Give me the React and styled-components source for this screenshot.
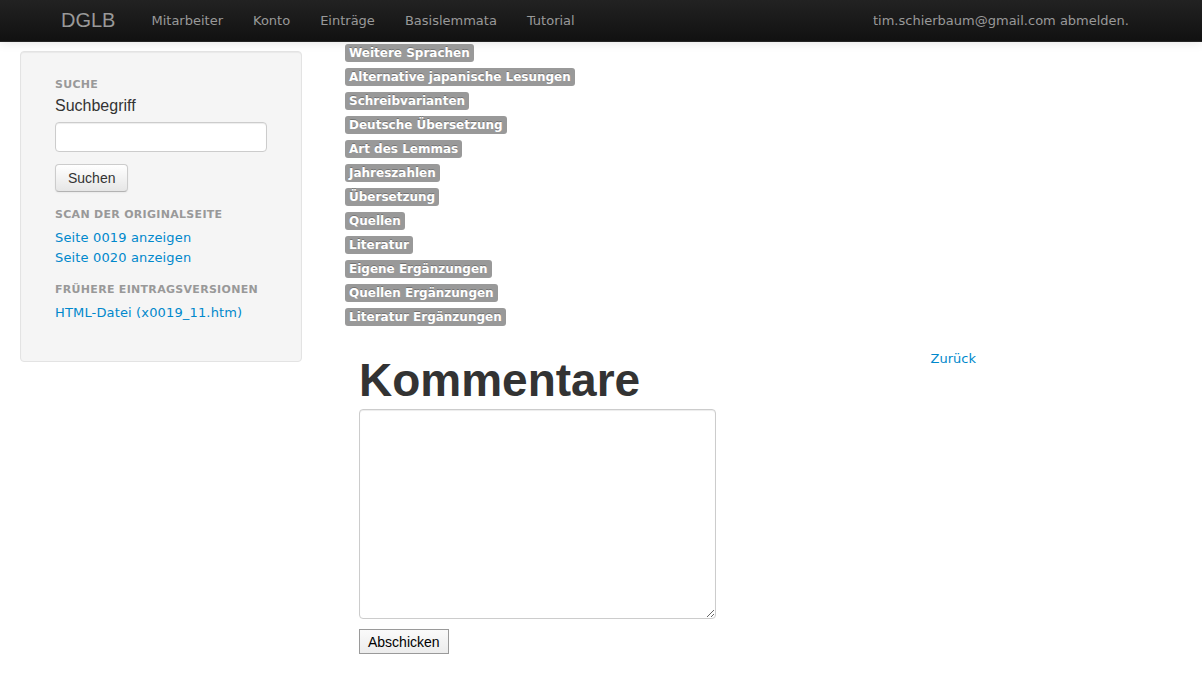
import React from "react";
import styled, { createGlobalStyle } from "styled-components";

const GlobalStyle = createGlobalStyle`
  body {
    margin: 0;
    background: #fff;
    font-family: "DejaVu Sans", Verdana, sans-serif;
    color: #333;
  }
`;

const Nav = styled.nav`
  display: flex;
  align-items: center;
  justify-content: space-between;
  height: 41px;
  padding-left: 61px;
  padding-right: 73px;
  background: linear-gradient(to bottom, #222222, #111111);
  border-bottom: 1px solid #252525;
  box-shadow: 0 1px 10px rgba(0, 0, 0, 0.1);
`;

const Brand = styled.a`
  font-family: "Liberation Sans", Arial, sans-serif;
  font-size: 20px;
  color: #999;
  margin-right: 21px;
`;

const NavLinks = styled.ul`
  display: flex;
  list-style: none;
  margin: 0;
  padding: 0;
  flex: 1;
`;

const NavLink = styled.li`
  font-size: 13px;
  color: #999;
  padding: 0 15px;
  cursor: pointer;

  &:hover {
    color: #fff;
  }
`;

const UserInfo = styled.span`
  font-size: 13px;
  color: #999;
`;

const Body = styled.div`
  display: flex;
  align-items: flex-start;
  padding-left: 20px;
`;

const Well = styled.aside`
  width: 212px;
  margin-top: 9px;
  padding: 24px 34px 38px;
  background: #f5f5f5;
  border: 1px solid #e3e3e3;
  border-radius: 4px;
  box-shadow: inset 0 1px 1px rgba(0, 0, 0, 0.05);
`;

const NavHeader = styled.div`
  font-size: 11px;
  line-height: 18px;
  font-weight: bold;
  letter-spacing: 0.3px;
  text-transform: uppercase;
  color: #999;
  margin-top: ${(p) => p.$gap || 0}px;
`;

const FieldLabel = styled.label`
  display: block;
  font-family: "Liberation Sans", Arial, sans-serif;
  font-size: 16px;
  line-height: 20px;
  margin-top: 2px;
`;

const TextInput = styled.input`
  display: block;
  box-sizing: border-box;
  width: 212px;
  height: 30px;
  margin-top: 6px;
  border: 1px solid #ccc;
  border-radius: 4px;
  background: #fff;
  box-shadow: inset 0 1px 1px rgba(0, 0, 0, 0.075);
`;

const SearchButton = styled.button`
  display: block;
  box-sizing: border-box;
  margin-top: 12px;
  height: 28px;
  padding: 0 12px;
  font-family: "Liberation Sans", Arial, sans-serif;
  font-size: 14px;
  color: #333;
  background: linear-gradient(to bottom, #ffffff, #e6e6e6);
  border: 1px solid #ccc;
  border-bottom-color: #b3b3b3;
  border-radius: 4px;
  box-shadow: inset 0 1px 0 rgba(255, 255, 255, 0.2), 0 1px 2px rgba(0, 0, 0, 0.05);
`;

const SideLink = styled.a`
  display: block;
  font-size: 13px;
  line-height: 20px;
  letter-spacing: 0.15px;
  color: #0088cc;
  text-decoration: none;
  margin-top: ${(p) => p.$gap || 0}px;
`;

const Main = styled.main`
  width: 631px;
  margin-left: 43px;
`;

const Labels = styled.div`
  display: flex;
  flex-direction: column;
  align-items: flex-start;
  gap: 6px;
  margin-top: 2px;
`;

const Label = styled.span`
  font-size: 12px;
  line-height: 14px;
  font-weight: bold;
  color: #fff;
  padding: 2px 4px;
  background: #999;
  border-radius: 3px;
  text-shadow: 0 -1px 0 rgba(0, 0, 0, 0.25);
`;

const Comments = styled.section`
  margin-top: 23px;
  padding-left: 14px;
`;

const HeaderRow = styled.div`
  display: flex;
  justify-content: space-between;
  align-items: flex-start;
`;

const Title = styled.h1`
  margin: 7px 0 0;
  font-family: "Liberation Sans", Arial, sans-serif;
  font-size: 46px;
  line-height: 49px;
  font-weight: bold;
  color: #333;
`;

const BackLink = styled.a`
  font-size: 13px;
  line-height: 18px;
  margin-top: 1px;
  color: #0088cc;
  text-decoration: none;
`;

const CommentBox = styled.textarea`
  display: block;
  box-sizing: border-box;
  width: 357px;
  height: 210px;
  margin-top: 4px;
  border: 1px solid #ccc;
  border-radius: 4px;
  background: #fff;
  box-shadow: inset 0 1px 1px rgba(0, 0, 0, 0.075);
`;

const SubmitButton = styled.button`
  display: block;
  margin-top: 10px;
  height: 25px;
  padding: 0 8px;
  font-family: "Liberation Sans", Arial, sans-serif;
  font-size: 14px;
  color: #000;
  background: linear-gradient(to bottom, #fafafa, #ececec);
  border: 1px solid #9a9a9a;
  border-radius: 0;
`;

const labels = [
  "Weitere Sprachen",
  "Alternative japanische Lesungen",
  "Schreibvarianten",
  "Deutsche Übersetzung",
  "Art des Lemmas",
  "Jahreszahlen",
  "Übersetzung",
  "Quellen",
  "Literatur",
  "Eigene Ergänzungen",
  "Quellen Ergänzungen",
  "Literatur Ergänzungen",
];

export default function App() {
  return (
    <>
      <GlobalStyle />
      <Nav>
        <Brand>DGLB</Brand>
        <NavLinks>
          <NavLink>Mitarbeiter</NavLink>
          <NavLink>Konto</NavLink>
          <NavLink>Einträge</NavLink>
          <NavLink>Basislemmata</NavLink>
          <NavLink>Tutorial</NavLink>
        </NavLinks>
        <UserInfo>tim.schierbaum@gmail.com abmelden.</UserInfo>
      </Nav>
      <Body>
        <Well>
          <NavHeader>Suche</NavHeader>
          <FieldLabel>Suchbegriff</FieldLabel>
          <TextInput type="text" />
          <SearchButton>Suchen</SearchButton>
          <NavHeader $gap={14}>Scan der Originalseite</NavHeader>
          <SideLink $gap={4}>Seite 0019 anzeigen</SideLink>
          <SideLink>Seite 0020 anzeigen</SideLink>
          <NavHeader $gap={13}>Frühere Eintragsversionen</NavHeader>
          <SideLink $gap={4}>HTML-Datei (x0019_11.htm)</SideLink>
        </Well>
        <Main>
          <Labels>
            {labels.map((l) => (
              <Label key={l}>{l}</Label>
            ))}
          </Labels>
          <Comments>
            <HeaderRow>
              <Title>Kommentare</Title>
              <BackLink>Zurück</BackLink>
            </HeaderRow>
            <CommentBox />
            <SubmitButton>Abschicken</SubmitButton>
          </Comments>
        </Main>
      </Body>
    </>
  );
}
